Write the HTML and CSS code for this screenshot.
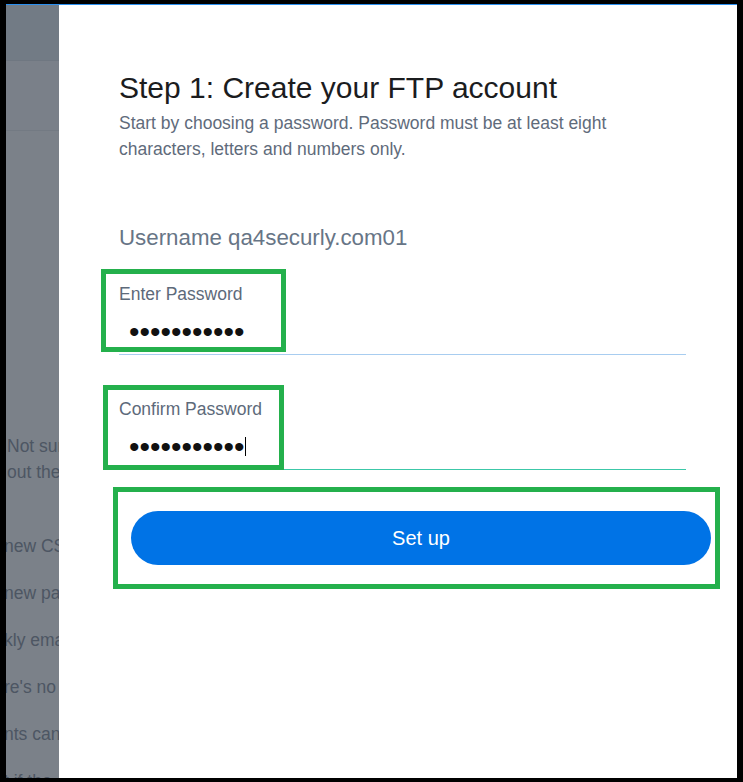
FILE: index.html
```html
<!DOCTYPE html>
<html lang="en">
<head>
    <meta charset="UTF-8">
    <meta name="viewport" content="width=device-width, initial-scale=1.0">
    <title>Create your FTP account</title>
    <link rel="stylesheet" href="styles.css">
</head>
<body>
    <div class="frame">
        <div class="backdrop">
            <div class="bd-top"></div>
            <div class="bd-nav"></div>
            <p class="bd-text">Not sure<br>out the</p>
            <ul class="bd-list">
                <li>new CSV</li>
                <li>new pass</li>
                <li>kly email</li>
                <li>re's no</li>
                <li>nts can</li>
                <li>t if the</li>
            </ul>
        </div>

        <div class="dialog">
            <h1>Step 1: Create your FTP account</h1>
            <p class="intro">Start by choosing a password. Password must be at least eight characters, letters and numbers only.</p>

            <div class="username">Username qa4securly.com01</div>

            <div class="field field-first">
                <label for="password">Enter Password</label>
                <input type="password" id="password" value="aaaaaaaaaaa" />
                <div class="mark mark-first"></div>
            </div>

            <div class="field field-second">
                <label for="confirm">Confirm Password</label>
                <input type="password" id="confirm" class="active" value="aaaaaaaaaaa" />
                <span class="caret"></span>
                <div class="mark mark-second"></div>
            </div>

            <div class="submit">
                <button type="button">Set up</button>
                <div class="mark mark-button"></div>
            </div>
        </div>
    </div>
</body>
</html>
```

FILE: styles.css
```css
html, body {
    height: 100%;
}

body {
    margin: 0;
    padding: 4px 6px 5px 6px;
    box-sizing: border-box;
    background-color: #000;
    font-family: "Liberation Sans", Arial, sans-serif;
    overflow: hidden;
}

.frame {
    display: flex;
    height: 773px;
    border-top: 1px solid #2a8ff0;
    overflow: hidden;
}

/* dimmed page behind the dialog */
.backdrop {
    width: 53px;
    flex-shrink: 0;
    background-color: #7b8189;
    color: #4d5663;
    overflow: hidden;
    white-space: nowrap;
    font-size: 17.5px;
    line-height: 26px;
}

.bd-top {
    height: 55px;
    background-color: #727b85;
    border-bottom: 1px solid #6f7781;
}

.bd-nav {
    height: 69px;
    background-color: #7a8089;
    border-bottom: 1px solid #737a83;
}

.bd-text {
    margin: 302px 0 0 0;
    padding-left: 1px;
}

.bd-list {
    list-style: none;
    margin: 48px 0 0 0;
    padding: 0;
}

.bd-list li {
    margin-bottom: 21px;
    text-indent: -2px;
}

.dialog {
    flex: 1;
    min-width: 0;
    background-color: #fff;
    padding: 0 51px 0 60px;
}

h1 {
    margin: 65px 0 0 0;
    font-size: 30px;
    line-height: 36px;
    font-weight: normal;
    color: #1b1c1e;
}

.intro {
    margin: 4px 0 0 0;
    font-size: 17.5px;
    line-height: 26px;
    color: #5f6b7b;
}

.username {
    margin-top: 62px;
    font-size: 22.3px;
    line-height: 28px;
    color: #677586;
}

.field {
    position: relative;
}

.field-first {
    margin-top: 31px;
}

.field-second {
    margin-top: 43px;
}

label {
    display: block;
    font-size: 17.5px;
    line-height: 22px;
    color: #5d6a7a;
}

input[type="password"] {
    display: block;
    width: 100%;
    height: 46px;
    margin-top: 4px;
    padding: 0 0 0 10px;
    border: none;
    border-bottom: 1px solid #a8cdf0;
    box-sizing: border-box;
    background: transparent;
    font-family: "Liberation Sans", Arial, sans-serif;
    font-size: 30px;
    color: #111;
    outline: none;
}

input.active {
    border-bottom-color: #3cc8a8;
}

.caret {
    position: absolute;
    left: 126px;
    top: 39px;
    width: 1px;
    height: 19px;
    background-color: #000;
}

.submit {
    position: relative;
    margin-top: 41px;
}

button {
    display: block;
    width: 580px;
    height: 54px;
    margin-left: 12px;
    border: none;
    border-radius: 27px;
    background-color: #0073e6;
    color: #fff;
    font-family: "Liberation Sans", Arial, sans-serif;
    font-size: 20px;
    cursor: pointer;
}

/* green review highlights */
.mark {
    position: absolute;
    border: 5px solid #24b04c;
    box-sizing: border-box;
    pointer-events: none;
}

.mark-first {
    left: -18px;
    top: -14px;
    width: 185px;
    height: 83px;
}

.mark-second {
    left: -16px;
    top: -13px;
    width: 181px;
    height: 85px;
}

.mark-button {
    left: -6px;
    top: -24px;
    width: 607px;
    height: 102px;
}
```
